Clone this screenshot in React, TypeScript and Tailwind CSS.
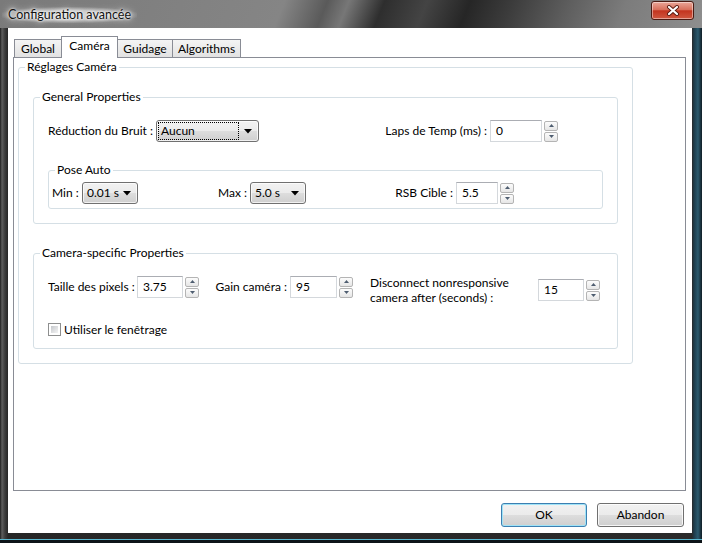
import React from "react";

function Arrow() {
  return (
    <svg width="8" height="5" viewBox="0 0 8 5">
      <path d="M0 0H8L4 4.5Z" fill="#000" />
    </svg>
  );
}

function Combo({ value, className, focus }: { value: string; className: string; focus?: boolean }) {
  return (
    <div
      className={`h-[22px] border border-[#707070] rounded-[3px] bg-[linear-gradient(#f2f2f2_0%,#ebebeb_50%,#dddddd_51%,#cfcfcf_100%)] shadow-[inset_0_0_0_1px_rgba(255,255,255,0.7)] flex items-stretch p-[1px] ${className}`}
    >
      <div
        className={`flex-1 min-w-0 whitespace-nowrap flex items-center pl-[2px] border ${focus ? "border-dotted border-black" : "border-transparent"}`}
      >
        {value}
      </div>
      <div className="w-[18px] shrink-0 flex items-center justify-center">
        <Arrow />
      </div>
    </div>
  );
}

function SpinBtn({ up }: { up?: boolean }) {
  return (
    <div className="h-[10px] border border-[#b4b4b4] rounded-[2px] bg-[linear-gradient(#fcfcfc,#e6e6e6)] flex items-center justify-center">
      <svg width="5" height="3" viewBox="0 0 5 3">
        {up ? <path d="M0 3L2.5 0L5 3Z" fill="#4e5d70" /> : <path d="M0 0L2.5 3L5 0Z" fill="#4e5d70" />}
      </svg>
    </div>
  );
}

function Spin() {
  return (
    <div className="ml-[2px] w-[14px] flex flex-col gap-px">
      <SpinBtn up />
      <SpinBtn />
    </div>
  );
}

function TextBox({ value, className }: { value: string; className: string }) {
  return (
    <div
      className={`h-[22px] border border-[#d4d8dc] border-t-[#abadb3] bg-white flex items-center pl-[5px] ${className}`}
    >
      {value}
    </div>
  );
}

function Group({ title, children, className }: { title: string; children: React.ReactNode; className: string }) {
  return (
    <fieldset className={`border border-[#d5dfe5] rounded-[3px] p-0 m-0 min-w-0 ${className}`}>
      <legend className="ml-[6px] px-[2px] leading-[16px]">{title}</legend>
      {children}
    </fieldset>
  );
}

function Tab({ label, selected, className }: { label: string; selected?: boolean; className: string }) {
  return (
    <div
      className={`border-l border-t border-r border-[#898c95] flex justify-center items-start pt-[1px] leading-[16px] ${
        selected
          ? "relative z-10 h-[22px] -mb-px bg-white"
          : "h-[18px] bg-[linear-gradient(#f4f4f4,#e2e2e2)]"
      } ${className}`}
    >
      {label}
    </div>
  );
}

function Button({ label, def }: { label: string; def?: boolean }) {
  return (
    <div
      className={`h-[24px] rounded-[3px] border flex items-center justify-center bg-[linear-gradient(#f2f2f2_0%,#ebebeb_50%,#dddddd_51%,#cfcfcf_100%)] ${
        def
          ? "w-[86px] border-[#3c7fb1] shadow-[inset_0_0_0_1px_#9fe3f7]"
          : "w-[87px] border-[#707070] shadow-[inset_0_0_0_1px_rgba(255,255,255,0.8)]"
      }`}
    >
      {label}
    </div>
  );
}

export default function App() {
  return (
    <div className="w-[702px] h-[543px] flex flex-col font-['Lato',sans-serif] text-[12px] text-black bg-[linear-gradient(90deg,#1c1c1c_0px,#5e5e5e_2px,#3b3b3b_5px,#262626_8px,#2a2a2a_692px,#1d3b4a_694px,#2b5a6e_698px,#0f1c24_702px)] shadow-[inset_0_-3px_0_#0d1418,inset_0_-4px_0_#5ab8d0]">
      {/* Title bar */}
      <div className="h-[28px] shrink-0 flex items-start pl-[8px] pr-[8px] bg-[linear-gradient(112deg,#7a7a7a_0%,#858585_40%,#5a5a5a_46%,#777_49%,#2e2e2e_54%,#444_60%,#262626_66%,#3c3c3c_72%,#5e5e5e_80%,#7c7c7c_88%,#8e8e8e_100%)]">
        <div className="mt-[7px] leading-[16px] text-[12.5px] text-[#111] bg-[radial-gradient(ellipse_at_center,rgba(220,220,220,0.75)_40%,rgba(200,200,200,0)_75%)] -ml-[6px] px-[6px] [text-shadow:0_0_8px_#fff,0_0_5px_#fff,0_0_2px_#fff]">
          Configuration avancée
        </div>
        <div className="ml-auto mt-[1px] w-[43px] h-[19px] rounded-[3px] border border-[#4b1a12] bg-[linear-gradient(#eaa698_0%,#d8705c_45%,#c3341f_52%,#cf5840_100%)] shadow-[inset_0_0_0_1px_rgba(255,255,255,0.45)] flex items-center justify-center">
          <svg width="14" height="11" viewBox="0 0 14 11">
            <path d="M3 2L11 9M11 2L3 9" stroke="#5a1a10" strokeWidth="4" strokeLinecap="round" />
            <path d="M3 2L11 9M11 2L3 9" stroke="#fff" strokeWidth="2.2" strokeLinecap="round" />
          </svg>
        </div>
      </div>

      {/* Client area */}
      <div className="flex-1 ml-[8px] mr-[10px] mb-[10px] bg-white flex flex-col pt-[8px] pl-[5px] pr-[6px] pb-[6px]">
        {/* Tabs */}
        <div className="flex items-end pl-[1px]">
          <Tab label="Global" className="w-[48px]" />
          <Tab label="Caméra" selected className="w-[57px] -ml-px" />
          <Tab label="Guidage" className="w-[56px] -ml-px" />
          <Tab label="Algorithms" className="w-[69px] -ml-px" />
        </div>

        {/* Panel */}
        <div className="h-[434px] border border-[#898c95] bg-white pl-[4px] pt-[1px]">
          <Group title="Réglages Caméra" className="w-[615px]">
            <div className="pt-[14px] px-[14px] pb-[14px]">
              <Group title="General Properties" className="w-full">
                <div className="pt-[15px] px-[14px] pb-[14px]">
                  <div className="flex items-center h-[22px]">
                    <div className="w-[108px]">Réduction du Bruit :</div>
                    <Combo value="Aucun" focus className="w-[103px]" />
                    <div className="w-[231px] text-right pr-[3px]">Laps de Temp (ms) :</div>
                    <TextBox value="0" className="w-[52px]" />
                    <Spin />
                  </div>
                  <Group title="Pose Auto" className="w-full mt-[20px]">
                    <div className="pt-[4px] pb-[4px] pl-[3px] flex items-center">
                      <div className="w-[30px]">Min :</div>
                      <Combo value="0.01 s" className="w-[56px]" />
                      <div className="w-[112px] text-right pr-[3px]">Max :</div>
                      <Combo value="5.0 s" className="w-[56px]" />
                      <div className="w-[150px] text-right pr-[3px]">RSB Cible :</div>
                      <TextBox value="5.5" className="w-[42px]" />
                      <Spin />
                    </div>
                  </Group>
                </div>
              </Group>

              <Group title="Camera-specific Properties" className="w-full mt-[21px]">
                <div className="pt-[15px] px-[14px] pb-[12px]">
                  <div className="flex items-start">
                    <div className="flex items-center h-[22px]">
                      <div className="w-[89px]">Taille des pixels :</div>
                      <TextBox value="3.75" className="w-[46px]" />
                      <Spin />
                      <div className="w-[91px] text-right pr-[3px]">Gain caméra :</div>
                      <TextBox value="95" className="w-[47px]" />
                      <Spin />
                    </div>
                    <div className="flex items-center h-[22px] mt-[3px] ml-[17px]">
                      <div className="w-[168px] leading-[15px]">
                        Disconnect nonresponsive
                        <br />
                        camera after (seconds) :
                      </div>
                      <TextBox value="15" className="w-[46px]" />
                      <Spin />
                    </div>
                  </div>
                  <div className="flex items-center mt-[22px] h-[13px]">
                    <div className="w-[13px] h-[13px] border border-[#8e8f8f] p-[2px] bg-white">
                      <div className="w-full h-full bg-[linear-gradient(135deg,#c5c8cc,#f4f4f4)]" />
                    </div>
                    <div className="ml-[3px] leading-[16px]">Utiliser le fenêtrage</div>
                  </div>
                </div>
              </Group>
            </div>
          </Group>
        </div>

        {/* Buttons */}
        <div className="flex justify-end gap-[10px] mt-[12px] pr-[2px]">
          <Button label="OK" def />
          <Button label="Abandon" />
        </div>
      </div>
    </div>
  );
}
